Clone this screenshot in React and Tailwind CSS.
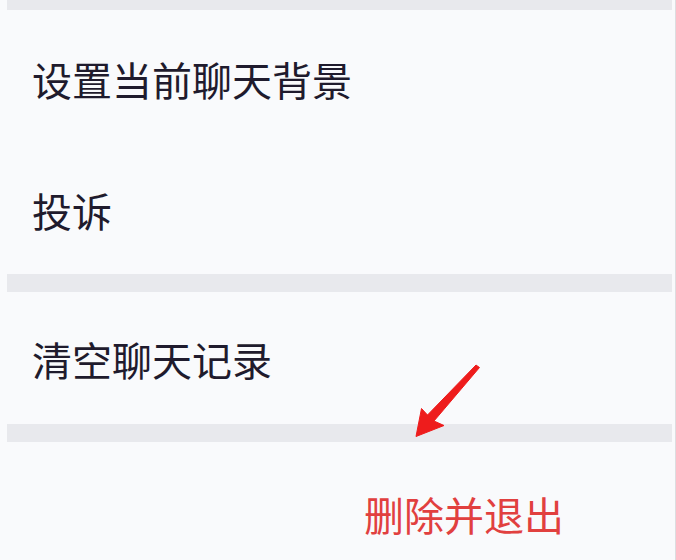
import React from 'react';

const font = { fontFamily: '"Noto Sans CJK SC", "Noto Sans", sans-serif' };

const Row = ({ children, className = '' }) => (
  <div className={`flex items-center pl-[32px] h-[132px] text-[40px] leading-none text-[#1f1b2d] ${className}`}>
    {children}
  </div>
);

const Band = ({ h }) => <div className={`ml-[7px] mr-[3px] bg-[#e8e9ed] ${h}`} />;

export default function App() {
  return (
    <div className="relative w-[676px] h-[560px] overflow-hidden bg-[#f9fafc] border-r border-[#dcdde0]" style={font}>
      <Band h="h-[10px]" />
      <Row className="pt-[6px]">设置当前聊天背景</Row>
      <Row className="pt-[4px]">投诉</Row>
      <Band h="h-[18px]" />
      <Row className="pt-[2px]">清空聊天记录</Row>
      <Band h="h-[18px]" />
      <div className="flex items-center h-[117px] pl-[364px] pt-[26px] text-[40px] leading-none text-[#e1403f]">
        删除并退出
      </div>

      {/* red annotation arrow */}
      <svg className="absolute left-0 top-0 pointer-events-none" width="676" height="560" viewBox="0 0 676 560">
        <polygon
          points="476,365 479.5,367.5 434,421 444,425.5 416,436.5 421.5,408.5 427.5,415"
          fill="#ee1c1c"
          stroke="#ee1c1c"
          strokeWidth="1"
          strokeLinejoin="round"
        />
      </svg>
    </div>
  );
}
